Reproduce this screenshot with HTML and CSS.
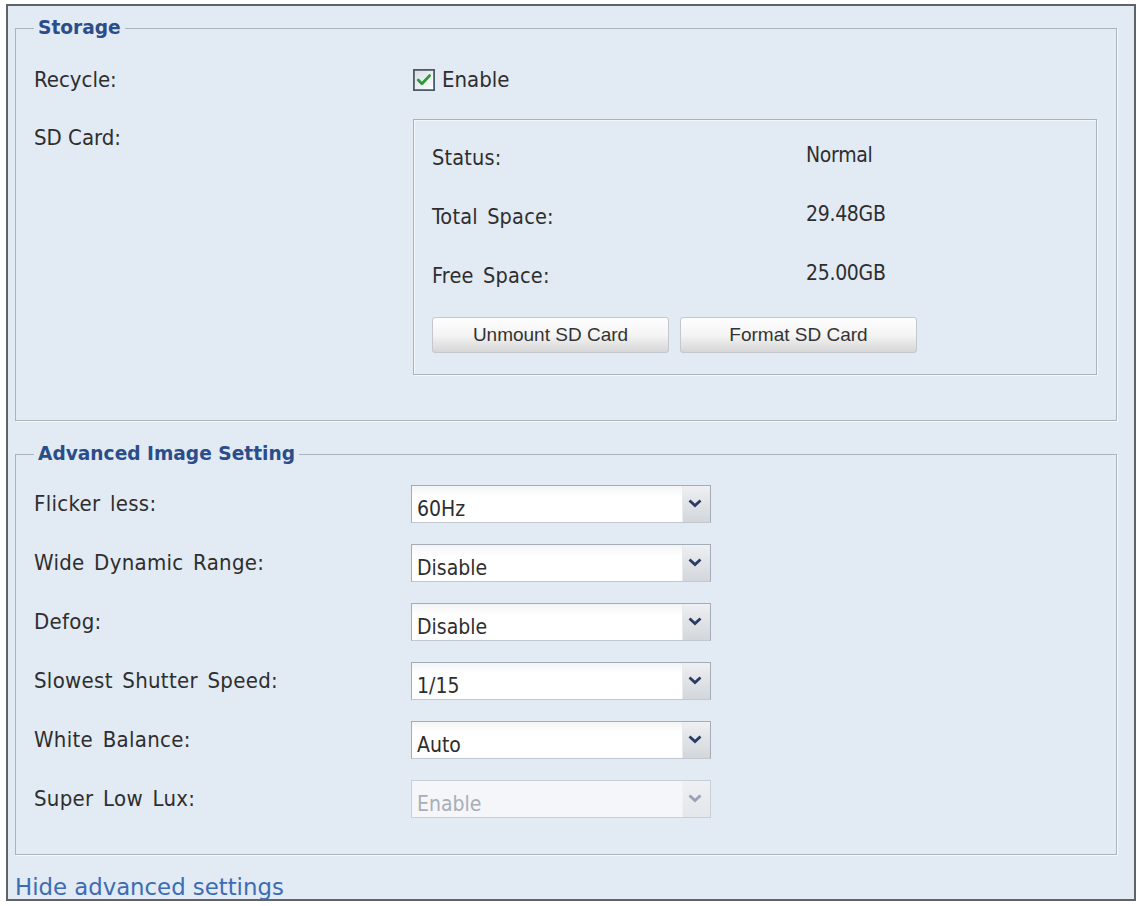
FILE: index.html
```html
<!DOCTYPE html>
<html lang="en">
<head>
<meta charset="utf-8">
<title>Storage and Advanced Image Setting</title>
<link rel="stylesheet" href="styles.css">
</head>
<body>
<div class="frame">
  <fieldset class="group group-storage">
    <legend class="legend">Storage</legend>
    <div class="row row-recycle">
      <div class="label">Recycle:</div>
      <label class="check">
        <svg class="checkbox" width="22" height="22" viewBox="0 0 22 22" aria-hidden="true">
          <defs>
            <linearGradient id="cbg" x1="0" y1="0" x2="1" y2="1">
              <stop offset="0" stop-color="#d6dce5"/>
              <stop offset="1" stop-color="#ffffff"/>
            </linearGradient>
          </defs>
          <rect x="0.9" y="0.9" width="20.2" height="20.2" fill="url(#cbg)" stroke="#4c5a6a" stroke-width="1.8"/>
          <path d="M5.2 11 L9 14.8 L16.6 6.6" fill="none" stroke="#2f9a35" stroke-width="2.8" stroke-linecap="round" stroke-linejoin="round"/>
        </svg>
        <span class="check-text">Enable</span>
      </label>
    </div>
    <div class="row row-sd">
      <div class="label label-sd">SD Card:</div>
      <div class="sdbox">
        <div class="info">
          <div class="info-label">Status:</div>
          <div class="info-value">Normal</div>
        </div>
        <div class="info">
          <div class="info-label">Total Space:</div>
          <div class="info-value">29.48GB</div>
        </div>
        <div class="info">
          <div class="info-label">Free Space:</div>
          <div class="info-value">25.00GB</div>
        </div>
        <div class="buttons">
          <button class="btn" type="button">Unmount SD Card</button>
          <button class="btn" type="button">Format SD Card</button>
        </div>
      </div>
    </div>
  </fieldset>

  <fieldset class="group group-adv">
    <legend class="legend">Advanced Image Setting</legend>
    <div class="adv-rows">
      <div class="adv-row">
        <div class="label label-adv">Flicker less:</div>
        <div class="select"><span class="select-text">60Hz</span><span class="select-arrow"><svg width="14" height="9" viewBox="0 0 14 9"><path d="M1.5 1.5 L7 6.5 L12.5 1.5" fill="none" stroke="#2c3b63" stroke-width="2.8"/></svg></span></div>
      </div>
      <div class="adv-row">
        <div class="label label-adv">Wide Dynamic Range:</div>
        <div class="select"><span class="select-text">Disable</span><span class="select-arrow"><svg width="14" height="9" viewBox="0 0 14 9"><path d="M1.5 1.5 L7 6.5 L12.5 1.5" fill="none" stroke="#2c3b63" stroke-width="2.8"/></svg></span></div>
      </div>
      <div class="adv-row">
        <div class="label label-adv">Defog:</div>
        <div class="select"><span class="select-text">Disable</span><span class="select-arrow"><svg width="14" height="9" viewBox="0 0 14 9"><path d="M1.5 1.5 L7 6.5 L12.5 1.5" fill="none" stroke="#2c3b63" stroke-width="2.8"/></svg></span></div>
      </div>
      <div class="adv-row">
        <div class="label label-adv">Slowest Shutter Speed:</div>
        <div class="select"><span class="select-text">1/15</span><span class="select-arrow"><svg width="14" height="9" viewBox="0 0 14 9"><path d="M1.5 1.5 L7 6.5 L12.5 1.5" fill="none" stroke="#2c3b63" stroke-width="2.8"/></svg></span></div>
      </div>
      <div class="adv-row">
        <div class="label label-adv">White Balance:</div>
        <div class="select"><span class="select-text">Auto</span><span class="select-arrow"><svg width="14" height="9" viewBox="0 0 14 9"><path d="M1.5 1.5 L7 6.5 L12.5 1.5" fill="none" stroke="#2c3b63" stroke-width="2.8"/></svg></span></div>
      </div>
      <div class="adv-row">
        <div class="label label-adv">Super Low Lux:</div>
        <div class="select select-disabled"><span class="select-text">Enable</span><span class="select-arrow"><svg width="14" height="9" viewBox="0 0 14 9"><path d="M1.5 1.5 L7 6.5 L12.5 1.5" fill="none" stroke="#9aa0b8" stroke-width="2.8"/></svg></span></div>
      </div>
    </div>
  </fieldset>

  <a class="toggle-link" href="#">Hide advanced settings</a>
</div>
</body>
</html>
```

FILE: styles.css
```css
html, body {
  margin: 0;
  padding: 0;
  background: #ffffff;
}

body {
  font-family: "DejaVu Sans Condensed", "DejaVu Sans", sans-serif;
  color: #2e2e2e;
}

.frame {
  box-sizing: border-box;
  width: 1130px;
  height: 897px;
  margin: 4px 0 0 6px;
  border: 2px solid #5f6266;
  background: #e2eaf4;
  padding: 12px 17px 0 7px;
}

.group {
  margin: 0;
  border: 1px solid #aab4c0;
  box-shadow: 1px 1px 0 #f7f9fc;
  padding: 0 0 0 18px;
  min-width: 0;
}

.group-storage {
  padding-top: 23px;
  padding-bottom: 45px;
}

.group-adv {
  margin-top: 23px;
  padding-top: 21px;
  padding-bottom: 36px;
}

.legend {
  font-family: "DejaVu Sans", sans-serif;
  font-weight: bold;
  font-size: 18.6px;
  line-height: 20px;
  color: #2b4d8a;
  padding: 0 4px;
  margin-left: 0;
}

.label {
  font-size: 22px;
  line-height: 38px;
  color: #2e2e2e;
}

.label-adv {
  word-spacing: 3px;
  letter-spacing: 0.3px;
}

.row {
  display: grid;
  grid-template-columns: 379px 1fr;
  align-items: start;
}

.row-recycle {
  height: 38px;
  align-items: center;
}

.row-sd {
  margin-top: 20px;
  padding-right: 19px;
}

.check {
  display: flex;
  align-items: center;
  gap: 7px;
  font-size: 22px;
  line-height: 38px;
}

.checkbox {
  display: block;
}

.sdbox {
  box-sizing: border-box;
  height: 256px;
  border: 1px solid #a9b3bf;
  box-shadow: inset 1px 1px 0 #f5f8fb, 1px 1px 0 #f5f8fb;
  padding: 23px 0 0 18px;
}

.info {
  display: grid;
  grid-template-columns: 374px 1fr;
  height: 30px;
  margin-bottom: 29px;
  font-size: 21.5px;
}

.info-label {
  line-height: 30px;
  word-spacing: 3px;
  letter-spacing: 0.2px;
}

.info-value {
  line-height: 30px;
  font-size: 21px;
  letter-spacing: -0.3px;
  position: relative;
  top: -3px;
}

.buttons {
  display: flex;
  gap: 11px;
  margin-top: -3px;
}

.btn {
  box-sizing: border-box;
  width: 237px;
  height: 36px;
  border: 1px solid #c4c7cc;
  border-radius: 3px;
  background: linear-gradient(#fefefe 0%, #f4f4f4 50%, #e2e2e2 80%, #d6d6d6 100%);
  box-shadow: 0 1px 0 #ffffff inset;
  font-family: "Liberation Sans", Arial, sans-serif;
  font-size: 19px;
  color: #333;
  padding: 0;
}

.adv-rows {
  display: flex;
  flex-direction: column;
  gap: 21px;
}

.adv-row {
  display: grid;
  grid-template-columns: 377px 300px;
  height: 38px;
}

.select {
  box-sizing: border-box;
  height: 38px;
  display: flex;
  border: 1px solid #a4acb7;
  border-bottom-color: #c2c8d0;
  background: linear-gradient(#f3f4f6, #ffffff 30%);
}

.select-text {
  flex: 1;
  font-size: 21px;
  line-height: 38px;
  padding: 4px 0 0 5px;
  box-sizing: border-box;
  color: #2e2e2e;
}

.select-arrow {
  width: 28px;
  border-left: 1px solid #e8eaee;
  background: linear-gradient(#eef0f3, #dde0e4 60%, #d3d6db);
  display: flex;
  justify-content: center;
  padding-top: 13px;
  box-sizing: border-box;
}

.select-arrow svg {
  display: block;
  margin-left: -3px;
}

.select-disabled {
  border-color: #c8ced6;
  background: #f4f6f9;
}

.select-disabled .select-text {
  color: #a9aeb6;
}

.select-disabled .select-arrow {
  background: linear-gradient(#eef0f3, #e3e6ea);
  border-left-color: #eef0f3;
}

.toggle-link {
  display: inline-block;
  margin: 20px 0 0 0;
  font-family: "DejaVu Sans", sans-serif;
  font-size: 22.8px;
  line-height: 24px;
  color: #3c6cb4;
  text-decoration: none;
}
```
